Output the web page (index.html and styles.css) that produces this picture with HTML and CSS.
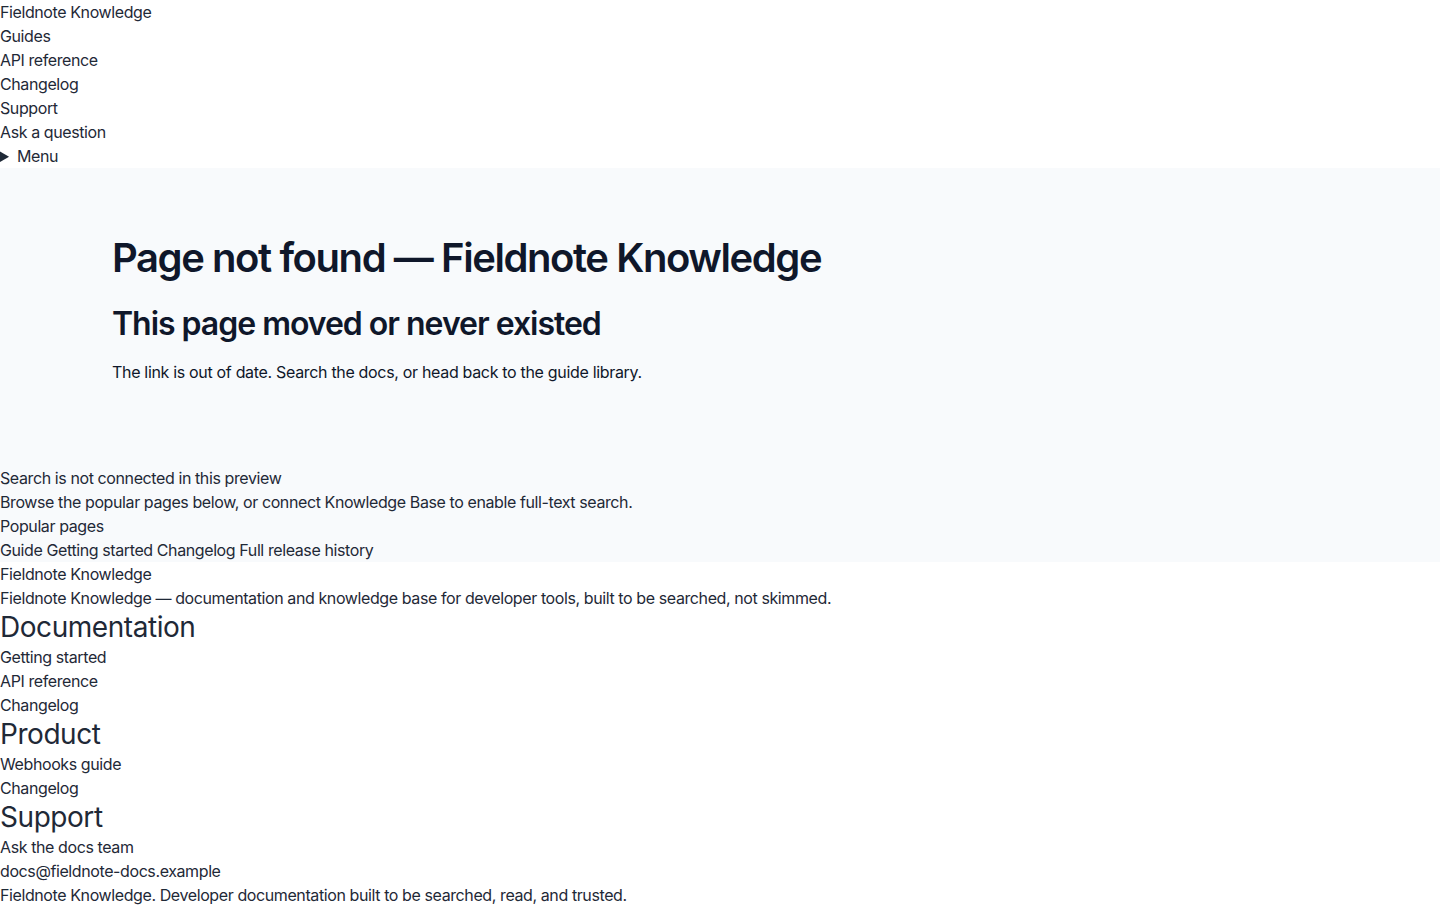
FILE: index.html
```html
<!DOCTYPE html>
<html lang="en">
<head>
  <meta charset="UTF-8">
  <meta name="viewport" content="width=device-width, initial-scale=1.0">
  <title>Page not found — Fieldnote Knowledge</title>
  <link rel="stylesheet" href="styles.css">
</head>
<body>

<!-- Header -->
<header class="site-header">
  <a class="brand" href="#">Fieldnote Knowledge</a>
  <nav class="nav">
    <a href="#">Guides</a>
    <a href="#">API reference</a>
    <a href="#">Changelog</a>
    <a href="#">Support</a>
  </nav>
  <a class="cta" href="#">Ask a question</a>
  <details class="menu">
    <summary>Menu</summary>
  </details>
</header>

<!-- Main content -->
<main class="page">
  <section class="hero">
    <h1>Page not found — Fieldnote Knowledge</h1>
    <h2>This page moved or never existed</h2>
    <p>The link is out of date. Search the docs, or head back to the guide library.</p>
  </section>

  <section class="search-note">
    <div>Search is not connected in this preview</div>
    <div>Browse the popular pages below, or connect Knowledge Base to enable full-text search.</div>
    <div>Popular pages</div>
    <div><a href="#">Guide Getting started</a> <a href="#">Changelog Full release history</a></div>
  </section>
</main>

<!-- Footer -->
<footer class="site-footer">
  <div>Fieldnote Knowledge</div>
  <p>Fieldnote Knowledge — documentation and knowledge base for developer tools, built to be searched, not skimmed.</p>
  <h3>Documentation</h3>
  <a href="#">Getting started</a>
  <a href="#">API reference</a>
  <a href="#">Changelog</a>
  <h3>Product</h3>
  <a href="#">Webhooks guide</a>
  <a href="#">Changelog</a>
  <h3>Support</h3>
  <a href="#">Ask the docs team</a>
  <a href="#">docs@fieldnote-docs.example</a>
  <p>Fieldnote Knowledge. Developer documentation built to be searched, read, and trusted.</p>
</footer>

</body>
</html>
```

FILE: styles.css
```css
* {
  box-sizing: border-box;
}

body {
  margin: 0;
  font-family: Inter, 'Noto Sans', sans-serif;
  font-size: 16px;
  line-height: 24px;
  letter-spacing: -0.025em;
  color: #1f2937;
  background-color: #fff;
}

a {
  color: inherit;
  text-decoration: none;
}

p, h1, h2, h3 {
  margin: 0;
}

.site-header a,
.nav a,
.site-footer a {
  display: block;
}

.menu summary {
  cursor: pointer;
}

.page {
  background-color: #f8fafc;
}

.hero {
  padding: 66px 112px 82px;
  color: #0f172a;
}

.hero h1 {
  font-size: 40px;
  line-height: 48px;
  font-weight: 600;
  letter-spacing: -0.0355em;
}

.hero h2 {
  margin-top: 22px;
  font-size: 32px;
  line-height: 40px;
  font-weight: 600;
  letter-spacing: -0.032em;
}

.hero p {
  margin-top: 16px;
  letter-spacing: -0.02em;
}

.site-footer h3 {
  font-size: 28px;
  line-height: 35px;
  font-weight: 400;
  letter-spacing: -0.016em;
}
```
